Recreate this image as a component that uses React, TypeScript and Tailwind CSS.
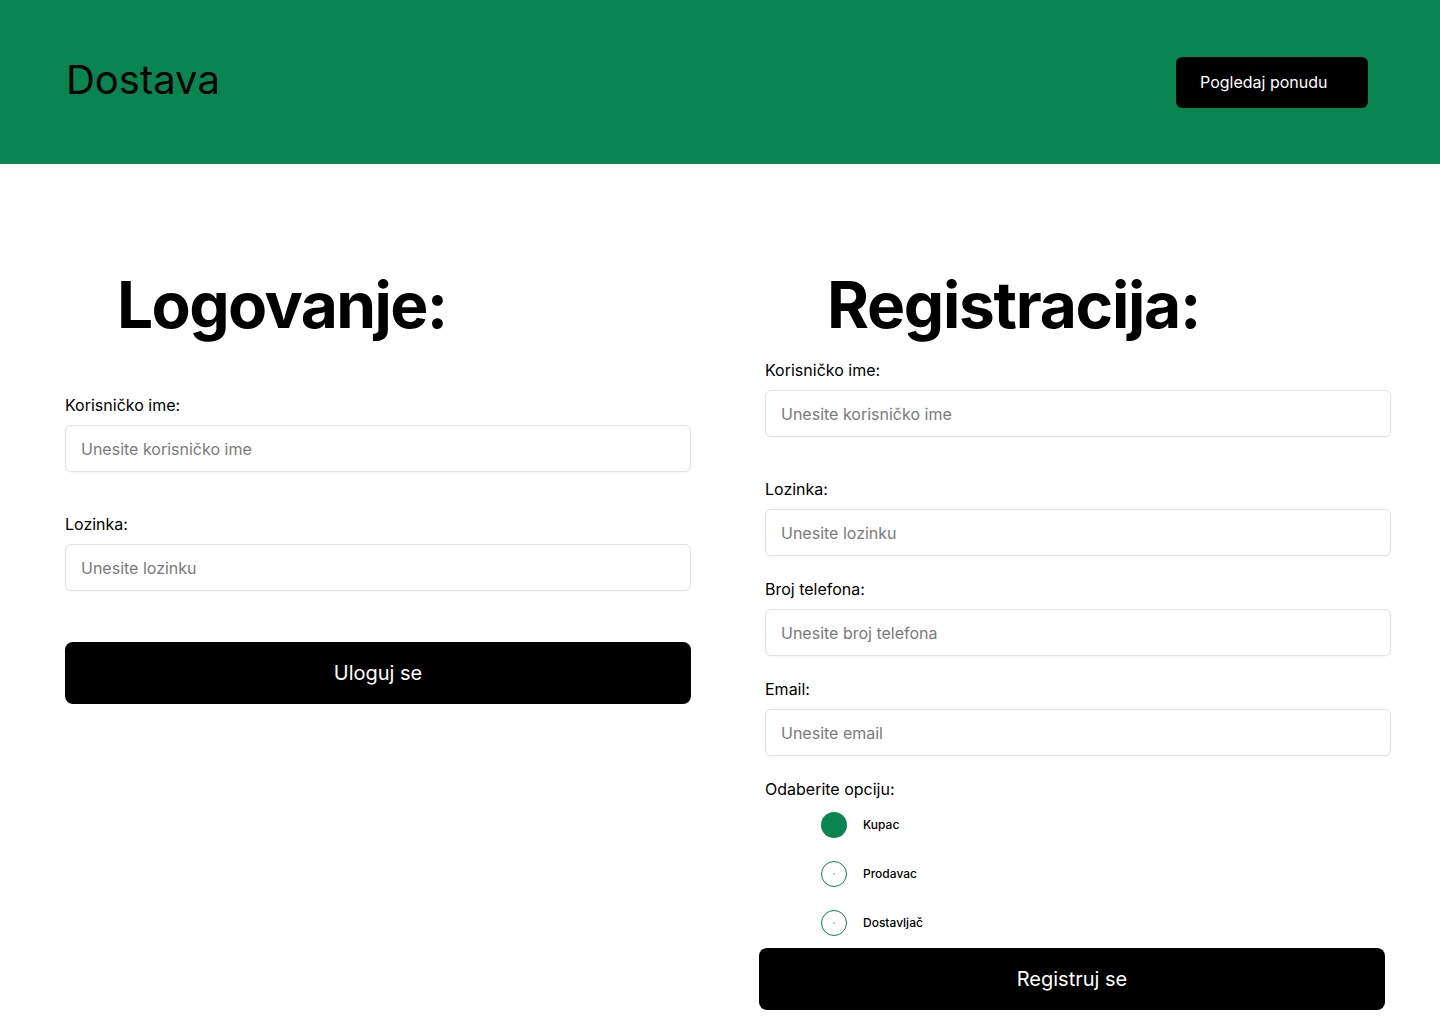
import React, { useState } from "react";

const Field = ({ label, placeholder, type = "text" }: { label: string; placeholder: string; type?: string }) => (
  <div className="flex flex-col gap-2">
    <label className="text-base leading-6 text-black">{label}</label>
    <input
      type={type}
      placeholder={placeholder}
      className="h-[47px] w-full rounded-md border border-[#e2e2e2] bg-white pl-[15px] pr-4 text-base text-black shadow-[0_1px_2px_rgba(0,0,0,0.04)] outline-none placeholder:text-[#7a7a7a]"
    />
  </div>
);

const roles = ["Kupac", "Prodavac", "Dostavljač"];

export default function App() {
  const [role, setRole] = useState("Kupac");

  return (
    <div className="min-h-screen bg-white font-['Inter',sans-serif] text-black">
      <header className="flex h-[164px] items-center justify-between bg-[#098552] pl-[66px] pr-[72px]">
        <h1 className="mb-1 text-[40px] leading-none text-black">Dostava</h1>
        <button className="h-[51px] w-[192px] rounded-md bg-black pl-6 text-left text-base text-white">Pogledaj ponudu</button>
      </header>

      <main className="grid grid-cols-2 gap-[74px] pl-[65px] pr-[49px] pt-[109px]">
        {/* Login */}
        <section className="flex flex-col">
          <h2 className="ml-[52px] text-[64px] font-bold leading-[64px] tracking-[-0.025em]">Logovanje:</h2>
          <div className="mt-[56px] flex flex-col gap-10">
            <Field label="Korisničko ime:" placeholder="Unesite korisničko ime" />
            <Field label="Lozinka:" placeholder="Unesite lozinku" type="password" />
          </div>
          <button className="mt-[51px] h-[62px] w-full rounded-lg bg-black text-xl text-white">Uloguj se</button>
        </section>

        {/* Registration */}
        <section className="flex flex-col">
          <h2 className="ml-[62px] text-[64px] font-bold leading-[64px] tracking-[-0.02em]">Registracija:</h2>
          <div className="mt-[21px] flex flex-col">
            <Field label="Korisničko ime:" placeholder="Unesite korisničko ime" />
            <div className="mt-10">
              <Field label="Lozinka:" placeholder="Unesite lozinku" type="password" />
            </div>
            <div className="mt-[21px]">
              <Field label="Broj telefona:" placeholder="Unesite broj telefona" />
            </div>
            <div className="mt-[21px]">
              <Field label="Email:" placeholder="Unesite email" />
            </div>
            <p className="mt-[21px] text-base leading-6">Odaberite opciju:</p>
            <div className="mt-[11px] flex flex-col gap-[23px] pl-[56px]">
              {roles.map((r) => (
                <label key={r} className="flex cursor-pointer items-center gap-4" onClick={() => setRole(r)}>
                  {role === r ? (
                    <span className="h-[26px] w-[26px] rounded-full bg-[#098552]" />
                  ) : (
                    <span className="flex h-[26px] w-[26px] items-center justify-center rounded-full border border-[#098552] bg-white">
                      <span className="h-[2px] w-[2px] rounded-full bg-[#bdbdbd]" />
                    </span>
                  )}
                  <span className="text-xs font-medium">{r}</span>
                </label>
              ))}
            </div>
          </div>
          <button className="-ml-[6px] mt-[12px] h-[62px] w-full rounded-lg bg-black text-xl text-white">Registruj se</button>
        </section>
      </main>
    </div>
  );
}
